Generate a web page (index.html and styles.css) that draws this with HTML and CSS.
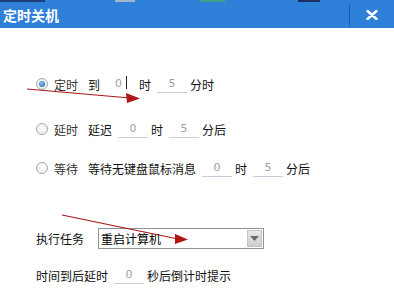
FILE: index.html
```html
<!DOCTYPE html>
<html lang="zh-CN">

<head>
    <meta charset="UTF-8">
    <title>定时关机</title>
    <link rel="stylesheet" href="styles.css">
</head>

<body>
    <div id="window">
        <div class="strip"></div>
        <div class="titlebar">
            <span class="title">定时关机</span>
            <span class="close">
                <svg width="12" height="10" viewBox="0 0 12 10">
                    <path d="M1.5 1 L10.5 9 M10.5 1 L1.5 9" stroke="#fff" stroke-width="2.4" stroke-linecap="round"/>
                </svg>
            </span>
        </div>

        <div class="content">
            <div class="row row-first">
                <span class="radio checked"></span>
                <span class="mode">定时</span>
                <span>到</span>
                <span class="field focused">0<i class="caret"></i></span>
                <span>时</span>
                <span class="field">5</span>
                <span>分时</span>
            </div>

            <div class="row row-second">
                <span class="radio"></span>
                <span class="mode">延时</span>
                <span>延迟</span>
                <span class="field">0</span>
                <span>时</span>
                <span class="field">5</span>
                <span>分后</span>
            </div>

            <div class="row row-third">
                <span class="radio"></span>
                <span class="mode">等待</span>
                <span>等待无键盘鼠标消息</span>
                <span class="field">0</span>
                <span>时</span>
                <span class="field">5</span>
                <span>分后</span>
            </div>

            <div class="row row-task">
                <span class="task-label">执行任务</span>
                <div class="select">
                    <span class="select-text">重启计算机</span>
                    <span class="select-btn">
                        <svg width="9" height="5" viewBox="0 0 9 5"><path d="M0 0 H9 L4.5 5 Z" fill="#6a6a6a"/></svg>
                    </span>
                </div>
            </div>

            <div class="row row-last">
                <span>时间到后延时</span>
                <span class="field">0</span>
                <span>秒后倒计时提示</span>
            </div>
        </div>

        <!-- red annotation arrows drawn over the dialog -->
        <svg class="arrows" width="394" height="295" viewBox="0 0 394 295">
            <path d="M27 89 L130 98" stroke="#a81818" stroke-width="1.2" fill="none"/>
            <path d="M126 93 L140 98.5 L127 103 Z" fill="#b01515"/>
            <path d="M62 215 L178 239" stroke="#a81818" stroke-width="1.2" fill="none"/>
            <path d="M175 234 L188 239.5 L175 244 Z" fill="#b01515"/>
        </svg>
    </div>
</body>

</html>
```

FILE: styles.css
```css
body {
    margin: 0;
    background-color: #ffffff;
    font-family: "Noto Sans CJK SC", "DejaVu Sans", sans-serif;
    font-size: 12px;
    color: #111;
}

#window {
    position: relative;
    width: 394px;
    height: 295px;
    overflow: hidden;
}

.strip {
    height: 2px;
    background: linear-gradient(to right,
        #1c3f7a 0, #1c3f7a 45px, #2f80d8 45px, #2f80d8 115px,
        #9fb8d0 115px, #9fb8d0 135px, #2f80d8 135px, #2f80d8 200px,
        #3fa08a 200px, #3fa08a 225px, #2f80d8 225px, #2f80d8 298px,
        #1c3060 298px, #1c3060 320px, #2f80d8 320px);
}

.titlebar {
    display: flex;
    align-items: center;
    height: 26px;
    background-color: #2f80d8;
}

.title {
    flex: 1;
    padding-left: 3px;
    color: #ffffff;
    font-size: 14px;
    font-weight: bold;
    line-height: 26px;
}

.close {
    display: flex;
    align-items: center;
    justify-content: center;
    width: 44px;
    height: 22px;
    border-left: 1px solid #1d5ea8;
}

.content {
    padding-left: 36px;
}

.row {
    display: flex;
    align-items: center;
    height: 20px;
}

.row-first { margin-top: 46px; }
.row-second { margin-top: 25px; }
.row-third { margin-top: 19px; }
.row-task { margin-top: 50px; height: 21px; }
.row-last { margin-top: 16px; }

.radio {
    box-sizing: border-box;
    width: 12px;
    height: 12px;
    border: 1px solid #a4acb4;
    border-radius: 50%;
    background: radial-gradient(circle at 50% 40%, #ffffff 0, #e4e7ea 100%);
    display: flex;
    align-items: center;
    justify-content: center;
}

.radio.checked::after {
    content: "";
    width: 6px;
    height: 6px;
    border-radius: 50%;
    background: radial-gradient(circle at 40% 35%, #8cc0ec 0, #2a66b0 90%);
}

.mode {
    margin-left: 6px;
    margin-right: 10px;
    color: #333;
}

.field {
    position: relative;
    box-sizing: border-box;
    width: 30px;
    height: 18px;
    margin: 0 3px 0 6px;
    border-bottom: 1px solid #c6d0da;
    text-align: center;
    color: #a0a0a0;
    font-family: "DejaVu Sans", sans-serif;
    font-size: 11px;
    line-height: 17px;
}

.field.focused {
    border-bottom-color: transparent;
}

.caret {
    display: inline-block;
    width: 1px;
    height: 13px;
    margin-left: 4px;
    vertical-align: -2px;
    background-color: #222;
}

.task-label {
    width: 62px;
}

.select {
    box-sizing: border-box;
    display: flex;
    align-items: center;
    width: 166px;
    height: 21px;
    border: 1px solid #8c949a;
    background-color: #ffffff;
}

.select-text {
    flex: 1;
    padding-left: 2px;
    color: #000;
}

.select-btn {
    display: flex;
    align-items: center;
    justify-content: center;
    width: 15px;
    height: 17px;
    margin-right: 1px;
    border: 1px solid #c4c4c4;
    box-sizing: border-box;
    background: linear-gradient(#e8e8e8, #cfcfcf);
}

.arrows {
    position: absolute;
    left: 0;
    top: 0;
}
```
